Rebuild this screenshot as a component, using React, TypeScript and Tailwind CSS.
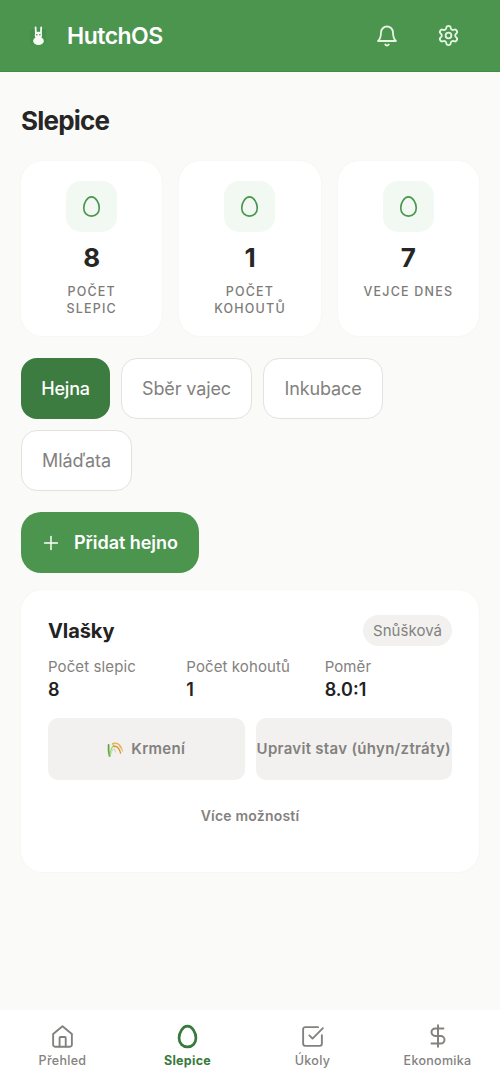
import type { ReactNode } from 'react';
import { DollarSign, Plus, Settings, SquareCheckBig } from 'lucide-react';
import clsx from 'clsx';

const stats = [
  { label: 'Počet slepic', value: '8' },
  { label: 'Počet kohoutů', value: '1' },
  { label: 'Vejce dnes', value: '7' },
];

const tabs = [
  { label: 'Hejna', width: 'w-[89px]', active: true },
  { label: 'Sběr vajec', width: 'w-[131px]' },
  { label: 'Inkubace', width: 'w-[120px]' },
  { label: 'Mláďata', width: 'w-[111px]' },
];

function RabbitLogo() {
  return (
    <svg width="16" height="24" viewBox="0 0 16 24" className="mt-px shrink-0">
      <rect x="0" y="5" width="16" height="15" rx="2" fill="#3f8645" opacity="0.4" />
      <path d="M5.900 9L5.600 3.400" stroke="#f4fbf1" strokeWidth="1.800" strokeLinecap="round" />
      <path d="M10.900 9L11.200 3.400" stroke="#f4fbf1" strokeWidth="1.800" strokeLinecap="round" />
      <rect x="4.800" y="7.800" width="7.200" height="7" rx="3" fill="#f4fbf1" />
      <ellipse cx="8.500" cy="17" rx="5.400" ry="4" fill="#f4fbf1" />
      <circle cx="6.900" cy="10.800" r=".7" fill="#3d6b40" />
      <circle cx="9.900" cy="10.800" r=".7" fill="#3d6b40" />
    </svg>
  );
}

function StrokeIcon({ size, strokeWidth, children }: { size: number; strokeWidth: number; children: ReactNode }) {
  return (
    <svg
      width={size}
      height={size}
      viewBox="0 0 24 24"
      fill="none"
      stroke="currentColor"
      strokeWidth={strokeWidth}
      strokeLinecap="round"
      strokeLinejoin="round"
    >
      {children}
    </svg>
  );
}

function BellIcon() {
  return (
    <StrokeIcon size={24} strokeWidth={1.8}>
      <path d="M6 8.500a6 6 0 0 1 12 0c0 6 3 8.500 3 8.500H3s3-2.500 3-8.500" />
      <path d="M10.300 20.500a1.940 1.940 0 0 0 3.400 0" />
    </StrokeIcon>
  );
}

function EggIcon({ size, strokeWidth }: { size: number; strokeWidth: number }) {
  return (
    <StrokeIcon size={size} strokeWidth={strokeWidth}>
      <path d="M12 2C7.600 2 3.900 8 3.900 13.500 3.900 18.600 7.400 22 12 22s8.100-3.400 8.100-8.500C20.100 8 16.400 2 12 2Z" />
    </StrokeIcon>
  );
}

function HomeIcon() {
  return (
    <StrokeIcon size={25} strokeWidth={1.8}>
      <path d="M3 9.600 12 2.200l9 7.400V20a1.800 1.800 0 0 1-1.800 1.800H4.800A1.800 1.800 0 0 1 3 20Z" />
      <path d="M9.200 21.500v-8.200a.8.8 0 0 1 .8-.8h4.300a.8.8 0 0 1 .8.8v8.200" />
    </StrokeIcon>
  );
}

// Small ear of rice used in front of the feeding button
function RiceIcon() {
  return (
    <svg width="17" height="17" viewBox="0 0 17 17" fill="none" strokeLinecap="round">
      <path d="M2.500 15C1.500 11 1.400 7 1.600 4" stroke="#5fa83c" strokeWidth="1.800" />
      <path d="M3.200 15C3.200 10 4.500 6.500 7 4" stroke="#a9d08b" strokeWidth="1.400" />
      <path d="M4 13c.3-2.500 1.600-4.500 3.500-5l1.200 3" stroke="#c8dfb2" strokeWidth="1.200" />
      <path d="M5.500 3C9 .8 13 3 14.500 7.500" stroke="#e6b04a" strokeWidth="1.500" strokeDasharray="2 1.400" />
      <path d="M7 5.500c3-.8 5.500 2 6.500 6.500" stroke="#dd8f35" strokeWidth="1.500" strokeDasharray="2 1.300" />
      <path d="M12 4.500c2 1.200 3.300 3.500 3.600 5.500" stroke="#edb95d" strokeWidth="1.200" />
    </svg>
  );
}

function StatCard({ label, value }: { label: string; value: string }) {
  return (
    <div className="flex h-[175px] flex-col items-center rounded-[21px] bg-white px-[21px] pt-5 text-center shadow-[0_0_2px_rgba(0,0,0,0.05)]">
      <div className="flex size-[51px] items-center justify-center rounded-[15px] bg-[#f2f9f3] text-[#4b964f]">
        <EggIcon size={23} strokeWidth={1.7} />
      </div>
      <div className="mt-[9px] text-[26px] leading-[34px] font-bold text-[#262626]">{value}</div>
      <div className="mt-[9px] text-[12.500px] leading-[16.500px] font-medium tracking-[1.200px] text-[#7d7b78] uppercase">
        {label}
      </div>
    </div>
  );
}

function Detail({ label, value }: { label: string; value: string }) {
  return (
    <div>
      <div className="text-[15px] leading-[22px] tracking-[0.100px] whitespace-nowrap text-[#83817e]">{label}</div>
      <div className="text-[18px] leading-[24px] font-semibold text-[#222]">{value}</div>
    </div>
  );
}

function NavItem({ label, icon, active }: { label: string; icon: ReactNode; active?: boolean }) {
  return (
    <div
      className={clsx(
        'flex flex-col items-center pt-[13px] text-[12.500px] leading-[18px] tracking-[0.300px]',
        active ? 'font-bold text-[#377a3c]' : 'font-medium text-[#83817e]'
      )}
    >
      <div className="flex h-[26px] items-center">{icon}</div>
      <span className="mt-[3px]">{label}</span>
    </div>
  );
}

function App() {
  return (
    <div className="flex h-[1082px] w-[500px] flex-col overflow-hidden bg-[#fafaf8] font-['Inter',sans-serif]">
      <header className="flex h-[72px] shrink-0 items-center border-b border-[#438a47] bg-[#4c954f] pr-[40px] pl-[30px] text-white">
        <RabbitLogo />
        <div className="ml-[21px] text-[23px] leading-[36px] font-semibold tracking-[-0.500px]">HutchOS</div>
        <div className="ml-auto flex items-center gap-[38px] text-[#e5f5e2]">
          <BellIcon />
          <Settings size={23} strokeWidth={1.9} />
        </div>
      </header>

      <main className="grow px-[21px] pt-[32px]">
        <h1 className="text-[26px] leading-[34px] font-bold tracking-[-0.800px] text-[#262626]">Slepice</h1>

        <div className="mt-[23px] grid grid-cols-3 gap-[17px]">
          {stats.map(stat => (
            <StatCard key={stat.label} label={stat.label} value={stat.value} />
          ))}
        </div>

        <div className="mt-[22px] flex flex-wrap gap-x-[11px] gap-y-[11px]">
          {tabs.map(tab => (
            <button
              key={tab.label}
              className={clsx(
                'h-[61px] rounded-[16px] text-[18px] whitespace-nowrap',
                tab.width,
                tab.active
                  ? 'bg-[#3d7c40] font-medium tracking-[-0.200px] text-white'
                  : 'border border-[#e3e2df] bg-white tracking-[-0.120px] text-[#83817e]'
              )}
            >
              {tab.label}
            </button>
          ))}
        </div>

        <button className="mt-[21px] flex h-[61px] w-[178px] items-center rounded-[20px] bg-[#4c954f] pl-[19px] text-[18px] font-semibold text-white">
          <Plus size={22} strokeWidth={1.6} />
          <span className="ml-[12px] tracking-[-0.050px] whitespace-nowrap">Přidat hejno</span>
        </button>

        <section className="mt-[17px] h-[282px] rounded-[21px] bg-white px-[27px] pt-[25px] shadow-[0_0_2px_rgba(0,0,0,0.05)]">
          <div className="flex items-center justify-between">
            <h2 className="text-[20px] font-bold tracking-[-0.100px] text-[#222]">Vlašky</h2>
            <span className="flex h-[31px] w-[89px] items-center justify-center rounded-full bg-[#f2f1ef] pt-px text-[15px] tracking-[0.050px] text-[#83817e]">
              Snůšková
            </span>
          </div>
          <div className="mt-[10px] grid grid-cols-3 gap-[11px]">
            <Detail label="Počet slepic" value="8" />
            <Detail label="Počet kohoutů" value="1" />
            <Detail label="Poměr" value="8.0:1" />
          </div>
          <div className="mt-[16px] grid grid-cols-2 gap-[11px] text-[15px] font-semibold tracking-[0.300px] text-[#83817e]">
            <button className="flex h-[62px] items-center justify-center gap-[7px] rounded-[10px] bg-[#f2f1ef]">
              <RiceIcon />
              Krmení
            </button>
            <button className="flex h-[62px] items-center justify-center rounded-[10px] bg-[#f2f1ef] whitespace-nowrap">
              Upravit stav (úhyn/ztráty)
            </button>
          </div>
          <button className="mt-[25px] w-full text-[14px] leading-[22px] font-semibold tracking-[0.200px] text-[#83817e]">
            Více možností
          </button>
        </section>
      </main>

      <nav className="grid h-[72px] shrink-0 grid-cols-4 bg-white">
        <NavItem label="Přehled" icon={<HomeIcon />} />
        <NavItem label="Slepice" icon={<EggIcon size={25} strokeWidth={2.6} />} active />
        <NavItem label="Úkoly" icon={<SquareCheckBig size={25} strokeWidth={1.8} />} />
        <NavItem label="Ekonomika" icon={<DollarSign size={26} strokeWidth={1.8} />} />
      </nav>
    </div>
  );
}

export default App;
